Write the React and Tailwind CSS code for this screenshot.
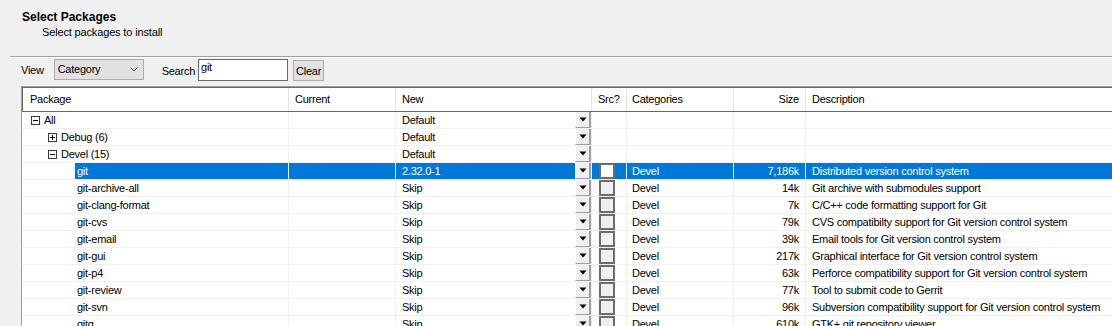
import React from 'react';

const groups = [
  { label: 'All', level: 0, open: true },
  { label: 'Debug (6)', level: 1, open: false },
  { label: 'Devel (15)', level: 1, open: true },
];

const packages = [
  { name: 'git', version: '2.32.0-1', size: '7,186k', desc: 'Distributed version control system', selected: true },
  { name: 'git-archive-all', version: 'Skip', size: '14k', desc: 'Git archive with submodules support' },
  { name: 'git-clang-format', version: 'Skip', size: '7k', desc: 'C/C++ code formatting support for Git' },
  { name: 'git-cvs', version: 'Skip', size: '79k', desc: 'CVS compatibilty support for Git version control system' },
  { name: 'git-email', version: 'Skip', size: '39k', desc: 'Email tools for Git version control system' },
  { name: 'git-gui', version: 'Skip', size: '217k', desc: 'Graphical interface for Git version control system' },
  { name: 'git-p4', version: 'Skip', size: '63k', desc: 'Perforce compatibility support for Git version control system' },
  { name: 'git-review', version: 'Skip', size: '77k', desc: 'Tool to submit code to Gerrit' },
  { name: 'git-svn', version: 'Skip', size: '96k', desc: 'Subversion compatibility support for Git version control system' },
  { name: 'gitg', version: 'Skip', size: '610k', desc: 'GTK+ git repository viewer' },
];

const cols = 'grid grid-cols-[265px_107px_196px_35px_107px_72px_1fr]';

// tree +/- box
const TreeBox = ({ open }) => (
  <svg width="9" height="9" viewBox="0 0 9 9" className="shrink-0">
    <rect x="0.5" y="0.5" width="8" height="8" fill="white" stroke="#3a3a3a" />
    <path d="M2 4.5h5" stroke="#000" />
    {!open && <path d="M4.5 2v5" stroke="#000" />}
  </svg>
);

// small grey drop button inside the "New" cell
const DropButton = () => (
  <div className="w-[16px] h-full bg-[#f0f0f0] border-r-2 border-b border-[#a0a0a0] border-l border-l-white flex items-center justify-center">
    <svg width="8" height="5" viewBox="0 0 8 5">
      <path d="M0.5 0.5h7L4 4.5z" fill="#000" />
    </svg>
  </div>
);

const Cell = ({ children, className = '' }) => (
  <div className={`h-[16px] border-l border-[#f0f0f0] ${className}`}>{children}</div>
);

export default function App() {
  return (
    <div className="w-[1112px] h-[326px] overflow-hidden bg-[#f0f0f0] text-black font-['Liberation_Sans',Arial,sans-serif] text-[11px] tracking-[-0.25px]">
      {/* header */}
      <div className="pt-[10px] pl-[22px]">
        <div className="font-bold text-[12px] tracking-normal leading-[15px]">Select Packages</div>
        <div className="pl-[20px] leading-[14px] tracking-[-0.15px]">Select packages to install</div>
      </div>
      <div className="ml-[10px] mt-[17px] border-t border-t-[#a0a0a0] border-b border-b-white" />

      {/* toolbar */}
      <div className="mt-[1px] h-[22px] flex items-start">
        <span className="ml-[21px] mt-[4px] leading-[14px]">View</span>
        <div className="ml-[10px] w-[90px] h-[21px] bg-[#e1e1e1] border border-[#adadad] flex items-center justify-between pl-[3px] pr-[5px]">
          <span className="leading-[14px] -mt-[2px]">Category</span>
          <svg width="8" height="5" viewBox="0 0 8 5">
            <path d="M0.5 0.5L4 4L7.5 0.5" fill="none" stroke="#606060" />
          </svg>
        </div>
        <span className="ml-[18px] mt-[5px] leading-[14px]">Search</span>
        <div className="ml-[3px] w-[90px] h-[22px] bg-white border border-[#6a6a6a] pl-[2px] pt-[1px] leading-[13px]">git</div>
        <div className="ml-[5px] mt-[1px] w-[31px] h-[21px] bg-[#e1e1e1] border border-[#adadad] flex items-center pl-[2px]">
          <span className="leading-[14px]">Clear</span>
        </div>
      </div>

      {/* package list */}
      <div className="mt-[5px] ml-[21px] border-l border-t border-[#a0a0a0] bg-white">
        <div className={`${cols} h-[25px] border-l border-t border-b border-[#696969] items-stretch`}>
          <div className="pl-[7px] flex items-center">Package</div>
          <div className="border-l border-[#e5e5e5] pl-[6px] flex items-center">Current</div>
          <div className="border-l border-[#e5e5e5] pl-[6px] flex items-center">New</div>
          <div className="border-l border-[#e5e5e5] pl-[6px] flex items-center">Src?</div>
          <div className="border-l border-[#e5e5e5] pl-[5px] flex items-center">Categories</div>
          <div className="border-l border-[#e5e5e5] pr-[6px] flex items-center justify-end">Size</div>
          <div className="border-l border-[#e5e5e5] pl-[6px] flex items-center">Description</div>
        </div>

        {groups.map((g) => (
          <div key={g.label} className={`${cols} h-[17px] border-l border-white border-b border-b-[#f0f0f0] leading-[16px]`}>
            <div className={`flex items-center gap-[4px] ${g.level === 0 ? 'pl-[8px]' : 'pl-[25px]'}`}>
              <TreeBox open={g.open} />
              <span>{g.label}</span>
            </div>
            <Cell />
            <Cell className="flex justify-between pl-[6px]">
              <span>Default</span>
              <DropButton />
            </Cell>
            <Cell />
            <Cell />
            <Cell />
            <Cell />
          </div>
        ))}

        {packages.map((p) => {
          const sel = p.selected ? 'bg-[#0078d7] text-white' : '';
          return (
            <div key={p.name} className={`${cols} h-[17px] border-l border-white border-b border-b-[#f0f0f0] leading-[16px]`}>
              <div className="pl-[52px] h-[16px]">
                <div className={`h-full pl-[2px] ${sel}`}>{p.name}</div>
              </div>
              <Cell className={sel} />
              <Cell className={`flex justify-between pl-[6px] ${sel}`}>
                <span>{p.version}</span>
                <DropButton />
              </Cell>
              <Cell className={`pl-[7px] ${sel}`}>
                <div className={`w-[16px] h-[16px] border-2 border-[#6d6d6d] ${p.selected ? 'bg-white' : 'bg-[#f0f0f0]'}`} />
              </Cell>
              <Cell className={`pl-[5px] ${sel}`}>Devel</Cell>
              <Cell className={`text-right pr-[6px] ${sel}`}>{p.size}</Cell>
              <Cell className={`pl-[6px] whitespace-nowrap ${sel}`}>{p.desc}</Cell>
            </div>
          );
        })}
      </div>
    </div>
  );
}
